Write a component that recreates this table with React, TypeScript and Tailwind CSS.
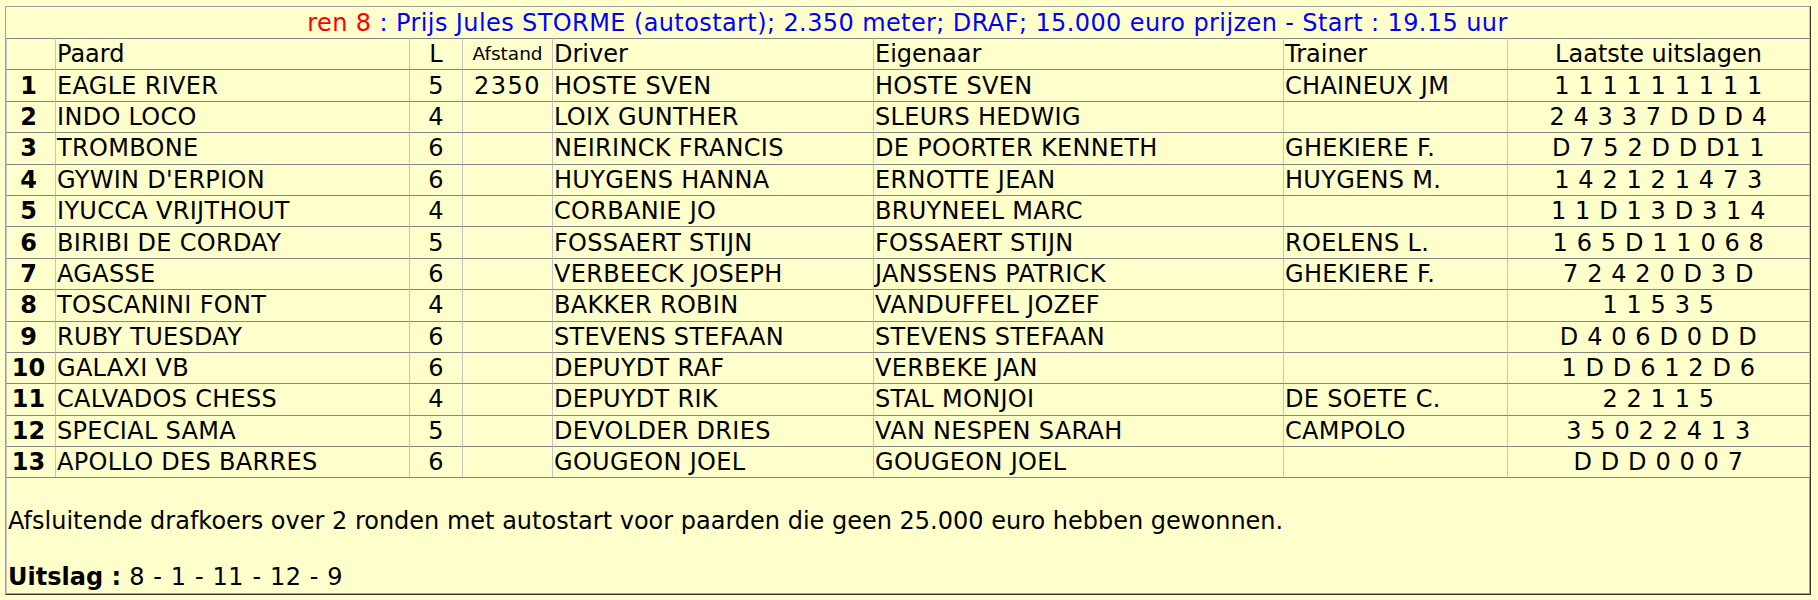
import React from "react";

type Row = {
  n: number;
  paard: string;
  l: string;
  afstand: string;
  driver: string;
  eigenaar: string;
  trainer: string;
  uitslagen: string;
};

const rows: Row[] = [
  { n: 1, paard: "EAGLE RIVER", l: "5", afstand: "2350", driver: "HOSTE SVEN", eigenaar: "HOSTE SVEN", trainer: "CHAINEUX JM", uitslagen: "1 1 1 1 1 1 1 1 1" },
  { n: 2, paard: "INDO LOCO", l: "4", afstand: "", driver: "LOIX GUNTHER", eigenaar: "SLEURS HEDWIG", trainer: "", uitslagen: "2 4 3 3 7 D D D 4" },
  { n: 3, paard: "TROMBONE", l: "6", afstand: "", driver: "NEIRINCK FRANCIS", eigenaar: "DE POORTER KENNETH", trainer: "GHEKIERE F.", uitslagen: "D 7 5 2 D D D1 1" },
  { n: 4, paard: "GYWIN D'ERPION", l: "6", afstand: "", driver: "HUYGENS HANNA", eigenaar: "ERNOTTE JEAN", trainer: "HUYGENS M.", uitslagen: "1 4 2 1 2 1 4 7 3" },
  { n: 5, paard: "IYUCCA VRIJTHOUT", l: "4", afstand: "", driver: "CORBANIE JO", eigenaar: "BRUYNEEL MARC", trainer: "", uitslagen: "1 1 D 1 3 D 3 1 4" },
  { n: 6, paard: "BIRIBI DE CORDAY", l: "5", afstand: "", driver: "FOSSAERT STIJN", eigenaar: "FOSSAERT STIJN", trainer: "ROELENS L.", uitslagen: "1 6 5 D 1 1 0 6 8" },
  { n: 7, paard: "AGASSE", l: "6", afstand: "", driver: "VERBEECK JOSEPH", eigenaar: "JANSSENS PATRICK", trainer: "GHEKIERE F.", uitslagen: "7 2 4 2 0 D 3 D" },
  { n: 8, paard: "TOSCANINI FONT", l: "4", afstand: "", driver: "BAKKER ROBIN", eigenaar: "VANDUFFEL JOZEF", trainer: "", uitslagen: "1 1 5 3 5" },
  { n: 9, paard: "RUBY TUESDAY", l: "6", afstand: "", driver: "STEVENS STEFAAN", eigenaar: "STEVENS STEFAAN", trainer: "", uitslagen: "D 4 0 6 D 0 D D" },
  { n: 10, paard: "GALAXI VB", l: "6", afstand: "", driver: "DEPUYDT RAF", eigenaar: "VERBEKE JAN", trainer: "", uitslagen: "1 D D 6 1 2 D 6" },
  { n: 11, paard: "CALVADOS CHESS", l: "4", afstand: "", driver: "DEPUYDT RIK", eigenaar: "STAL MONJOI", trainer: "DE SOETE C.", uitslagen: "2 2 1 1 5" },
  { n: 12, paard: "SPECIAL SAMA", l: "5", afstand: "", driver: "DEVOLDER DRIES", eigenaar: "VAN NESPEN SARAH", trainer: "CAMPOLO", uitslagen: "3 5 0 2 2 4 1 3" },
  { n: 13, paard: "APOLLO DES BARRES", l: "6", afstand: "", driver: "GOUGEON JOEL", eigenaar: "GOUGEON JOEL", trainer: "", uitslagen: "D D D 0 0 0 7" },
];

const cell =
  "border-t border-l border-t-[#858585] border-l-[#c4c4cc] px-[1px] py-0 h-[31.4px] whitespace-nowrap overflow-hidden";

export default function App() {
  return (
    <div
      className="h-[600px] w-full overflow-hidden bg-[#ffffcc] pt-[6px] pl-[5px] text-black text-[24px] leading-[28px]"
      style={{ fontFamily: '"DejaVu Sans", Verdana, sans-serif' }}
    >
      <table className="table-fixed border-separate border-spacing-0 w-[1806px] border border-t-[#a0a0a0] border-l-[#a0a0a0] border-r-[#333333] border-b-[#333333]">
        <colgroup>
          <col className="w-[49px]" />
          <col className="w-[354px]" />
          <col className="w-[53px]" />
          <col className="w-[90px]" />
          <col className="w-[321px]" />
          <col className="w-[410px]" />
          <col className="w-[224px]" />
          <col className="w-[303px]" />
        </colgroup>
        <tbody>
          <tr>
            <td
              colSpan={8}
              className="border-r border-r-[#c4c4cc] px-[1px] h-[31px] text-center whitespace-nowrap tracking-[0.4px]"
            >
              <span className="text-[#ff0000]">ren 8</span>
              <span className="text-[#0000ff]">
                {" "}: Prijs Jules STORME (autostart); 2.350 meter; DRAF; 15.000 euro prijzen - Start : 19.15 uur
              </span>
            </td>
          </tr>
          <tr>
            <td className={cell}></td>
            <td className={cell}>Paard</td>
            <td className={`${cell} text-center`}>L</td>
            <td className={`${cell} text-center text-[18.5px]`}>Afstand</td>
            <td className={cell}>Driver</td>
            <td className={cell}>Eigenaar</td>
            <td className={cell}>Trainer</td>
            <td className={`${cell} text-center border-r border-r-[#c4c4cc]`}>Laatste uitslagen</td>
          </tr>
          {rows.map((r) => (
            <tr key={r.n}>
              <td className={`${cell} text-center font-bold pr-[6px]`}>{r.n}</td>
              <td className={`${cell} tracking-[0.3px]`}>{r.paard}</td>
              <td className={`${cell} text-center`}>{r.l}</td>
              <td className={`${cell} text-center tracking-[1.5px]`}>{r.afstand}</td>
              <td className={`${cell} tracking-[0.3px]`}>{r.driver}</td>
              <td className={`${cell} tracking-[0.3px]`}>{r.eigenaar}</td>
              <td className={`${cell} tracking-[0.3px]`}>{r.trainer}</td>
              <td className={`${cell} text-center tracking-[0.6px] border-r border-r-[#c4c4cc]`}>{r.uitslagen}</td>
            </tr>
          ))}
          <tr>
            <td
              colSpan={8}
              className="border-t border-l border-r border-b border-t-[#858585] border-l-[#c4c4cc] border-r-[#a0a0a0] border-b-[#a0a0a0] px-[1px] pt-[1px] pb-[2px] text-left align-top"
            >
              <span className="inline-block w-[3px] h-[3px] ml-[3px] align-[3px] bg-white"></span>
              <br />
              Afsluitende drafkoers over 2 ronden met autostart voor paarden die geen 25.000 euro hebben gewonnen.
              <br />
              <br />
              <b>Uitslag :</b>
              <span className="tracking-[0.6px]"> 8 - 1 - 11 - 12 - 9</span>
            </td>
          </tr>
        </tbody>
      </table>
    </div>
  );
}
